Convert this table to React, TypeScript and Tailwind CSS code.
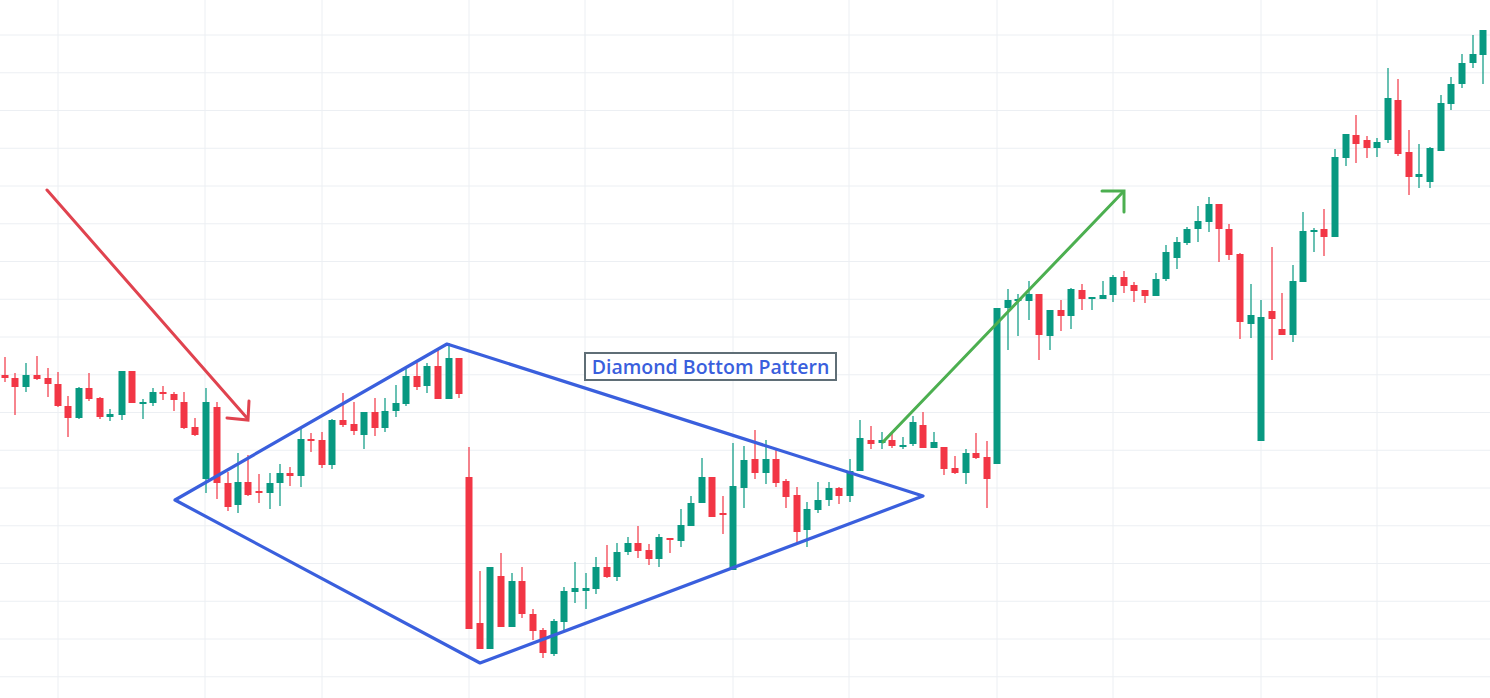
type Candle = [number, number, number, number, number, 'g' | 'r'];

// x, bodyTop, bodyBottom, wickTop, wickBottom, colour
const candles: Candle[] = [
  [5, 375, 378, 357, 382, 'r'],
  [15, 378, 387, 373, 415, 'r'],
  [26, 375, 387, 363, 392, 'g'],
  [37, 375, 379, 356, 380, 'r'],
  [48, 378, 384, 368, 397, 'r'],
  [58, 384, 406, 372, 407, 'r'],
  [68, 406, 418, 396, 437, 'r'],
  [79, 388, 418, 387, 419, 'g'],
  [89, 388, 399, 373, 401, 'r'],
  [100, 398, 417, 397, 419, 'r'],
  [110, 414, 417, 409, 421, 'g'],
  [122, 371, 415, 371, 420, 'g'],
  [132, 371, 403, 371, 403, 'r'],
  [143, 402, 404, 399, 419, 'g'],
  [153, 392, 403, 388, 406, 'g'],
  [163, 392, 394, 386, 400, 'r'],
  [174, 394, 400, 392, 411, 'r'],
  [184, 402, 428, 392, 429, 'r'],
  [195, 427, 435, 418, 436, 'r'],
  [206, 402, 479, 388, 493, 'g'],
  [217, 407, 483, 402, 499, 'r'],
  [228, 483, 507, 472, 511, 'r'],
  [238, 482, 505, 453, 513, 'g'],
  [248, 482, 495, 455, 496, 'r'],
  [259, 491, 493, 474, 503, 'r'],
  [270, 483, 493, 473, 509, 'g'],
  [280, 473, 483, 464, 506, 'g'],
  [290, 473, 476, 467, 486, 'r'],
  [301, 439, 476, 429, 487, 'g'],
  [311, 439, 441, 433, 452, 'r'],
  [322, 440, 465, 432, 468, 'r'],
  [332, 420, 465, 419, 469, 'g'],
  [343, 420, 425, 393, 427, 'r'],
  [354, 424, 431, 402, 435, 'r'],
  [364, 412, 435, 412, 449, 'g'],
  [375, 412, 428, 398, 436, 'r'],
  [385, 411, 428, 398, 432, 'g'],
  [396, 403, 411, 385, 417, 'g'],
  [406, 376, 404, 369, 406, 'g'],
  [417, 376, 387, 363, 390, 'r'],
  [427, 366, 386, 363, 393, 'g'],
  [438, 366, 399, 350, 399, 'r'],
  [449, 358, 399, 343, 399, 'g'],
  [459, 358, 394, 358, 398, 'r'],
  [469, 477, 629, 447, 629, 'r'],
  [480, 623, 649, 571, 649, 'r'],
  [490, 567, 649, 567, 649, 'g'],
  [501, 576, 627, 553, 627, 'r'],
  [512, 581, 627, 573, 627, 'g'],
  [522, 581, 614, 567, 618, 'r'],
  [533, 614, 631, 609, 640, 'r'],
  [543, 630, 653, 628, 658, 'r'],
  [554, 621, 654, 619, 656, 'g'],
  [564, 591, 622, 587, 630, 'g'],
  [575, 588, 592, 562, 603, 'g'],
  [586, 588, 591, 573, 609, 'g'],
  [596, 567, 589, 557, 594, 'g'],
  [607, 567, 577, 545, 578, 'r'],
  [617, 552, 577, 543, 581, 'g'],
  [628, 543, 552, 537, 555, 'g'],
  [638, 543, 551, 526, 558, 'r'],
  [649, 550, 559, 544, 565, 'r'],
  [659, 537, 559, 534, 567, 'g'],
  [670, 538, 540, 538, 553, 'r'],
  [681, 525, 541, 509, 547, 'g'],
  [691, 503, 526, 496, 526, 'g'],
  [702, 477, 503, 458, 503, 'g'],
  [712, 477, 517, 477, 517, 'r'],
  [723, 513, 515, 496, 534, 'r'],
  [733, 486, 570, 443, 570, 'g'],
  [744, 460, 488, 446, 508, 'g'],
  [755, 459, 473, 430, 479, 'r'],
  [766, 459, 473, 440, 484, 'g'],
  [776, 459, 483, 449, 487, 'r'],
  [786, 481, 497, 479, 508, 'r'],
  [797, 495, 532, 487, 542, 'r'],
  [807, 509, 530, 502, 547, 'g'],
  [818, 500, 510, 482, 513, 'g'],
  [829, 488, 500, 482, 506, 'g'],
  [839, 488, 496, 487, 504, 'r'],
  [850, 471, 496, 459, 502, 'g'],
  [860, 438, 471, 420, 471, 'g'],
  [871, 440, 444, 426, 449, 'r'],
  [882, 440, 443, 432, 449, 'g'],
  [892, 440, 446, 433, 448, 'r'],
  [903, 445, 447, 437, 449, 'g'],
  [913, 422, 444, 416, 446, 'g'],
  [923, 425, 448, 412, 448, 'r'],
  [934, 442, 448, 432, 448, 'g'],
  [944, 447, 469, 447, 475, 'r'],
  [955, 468, 473, 456, 474, 'r'],
  [966, 453, 473, 449, 484, 'g'],
  [976, 453, 458, 433, 459, 'r'],
  [987, 457, 479, 441, 508, 'r'],
  [997, 308, 464, 308, 464, 'g'],
  [1008, 300, 308, 289, 350, 'g'],
  [1018, 299, 301, 294, 336, 'g'],
  [1029, 294, 301, 281, 320, 'g'],
  [1039, 294, 335, 294, 360, 'r'],
  [1050, 310, 336, 310, 350, 'g'],
  [1061, 310, 316, 300, 331, 'r'],
  [1071, 289, 316, 288, 329, 'g'],
  [1082, 290, 299, 284, 310, 'r'],
  [1092, 297, 299, 297, 310, 'g'],
  [1103, 295, 299, 281, 299, 'g'],
  [1113, 277, 295, 275, 302, 'g'],
  [1124, 277, 286, 271, 293, 'r'],
  [1134, 285, 291, 282, 302, 'r'],
  [1145, 290, 296, 290, 303, 'r'],
  [1156, 279, 296, 273, 296, 'g'],
  [1166, 252, 279, 245, 281, 'g'],
  [1177, 242, 258, 237, 269, 'g'],
  [1187, 229, 243, 227, 245, 'g'],
  [1198, 221, 229, 206, 242, 'g'],
  [1209, 204, 222, 197, 232, 'g'],
  [1219, 204, 229, 204, 262, 'r'],
  [1229, 229, 255, 224, 260, 'r'],
  [1240, 254, 322, 253, 339, 'r'],
  [1251, 315, 324, 284, 338, 'g'],
  [1261, 317, 441, 300, 441, 'g'],
  [1272, 311, 319, 247, 360, 'r'],
  [1282, 329, 335, 293, 335, 'r'],
  [1293, 281, 335, 265, 342, 'g'],
  [1303, 231, 282, 212, 282, 'g'],
  [1314, 230, 232, 228, 252, 'g'],
  [1324, 229, 237, 209, 256, 'r'],
  [1335, 157, 237, 149, 237, 'g'],
  [1346, 134, 158, 134, 166, 'g'],
  [1356, 135, 144, 115, 163, 'r'],
  [1367, 140, 148, 136, 158, 'r'],
  [1377, 142, 148, 138, 157, 'g'],
  [1388, 98, 140, 68, 143, 'g'],
  [1398, 100, 154, 79, 156, 'r'],
  [1409, 152, 177, 130, 195, 'r'],
  [1419, 174, 177, 144, 188, 'g'],
  [1430, 148, 182, 147, 188, 'g'],
  [1441, 103, 151, 95, 151, 'g'],
  [1451, 84, 104, 77, 110, 'g'],
  [1462, 63, 84, 54, 88, 'g'],
  [1473, 54, 63, 35, 68, 'g'],
  [1483, 30, 55, 30, 84, 'g'],
];

const GREEN = '#089981';
const RED = '#f23645';
const BLUE = '#3a5fdd';

const gridX = [58, 205, 322, 469, 585, 733, 849, 997, 1113, 1261, 1377];
const gridY = Array.from({ length: 18 }, (_, i) => 35 + i * 37.75);

function CandleChart() {
  return (
    <svg width="1490" height="698" viewBox="0 0 1490 698" className="block">
      {/* grid */}
      {gridY.map((y) => (
        <line key={`h${y}`} x1="0" x2="1490" y1={y} y2={y} stroke="#eceff3" strokeWidth="1" />
      ))}
      {gridX.map((x) => (
        <line key={`v${x}`} x1={x} x2={x} y1="0" y2="698" stroke="#eceff3" strokeWidth="1" />
      ))}

      {/* candles */}
      {candles.map(([x, bt, bb, wt, wb, c]) => {
        const fill = c === 'g' ? GREEN : RED;
        return (
          <g key={x} fill={fill}>
            <rect x={x - 0.6} y={wt} width="1.2" height={wb - wt} />
            <rect x={x - 3.5} y={bt} width="7" height={Math.max(bb - bt, 2)} />
          </g>
        );
      })}

      {/* diamond */}
      <polygon
        points="175,500 447,344 923,496 480,663"
        fill="none"
        stroke={BLUE}
        strokeWidth="3.2"
        strokeLinejoin="round"
      />

      {/* red arrow */}
      <g stroke="#e0434f" strokeWidth="3" strokeLinecap="round" fill="none">
        <line x1="47" y1="190" x2="247" y2="418" />
        <polyline points="249,401 248,420 227,418" />
      </g>

      {/* green arrow */}
      <g stroke="#4caf50" strokeWidth="3" strokeLinecap="round" fill="none">
        <line x1="883" y1="442" x2="1123" y2="192" />
        <polyline points="1102,191 1124,191 1124,212" />
      </g>
    </svg>
  );
}

export default function App() {
  return (
    <div className="relative w-[1490px] h-[698px] bg-white overflow-hidden">
      <CandleChart />
      <div className="absolute left-[584px] top-[352px] w-[253px] h-[29px] border-2 border-[#5f6e76] bg-white flex items-center justify-center">
        <span className="text-[19.5px] leading-none font-semibold text-[#3a5fdd] font-['Open_Sans',sans-serif]">
          Diamond Bottom Pattern
        </span>
      </div>
    </div>
  );
}
